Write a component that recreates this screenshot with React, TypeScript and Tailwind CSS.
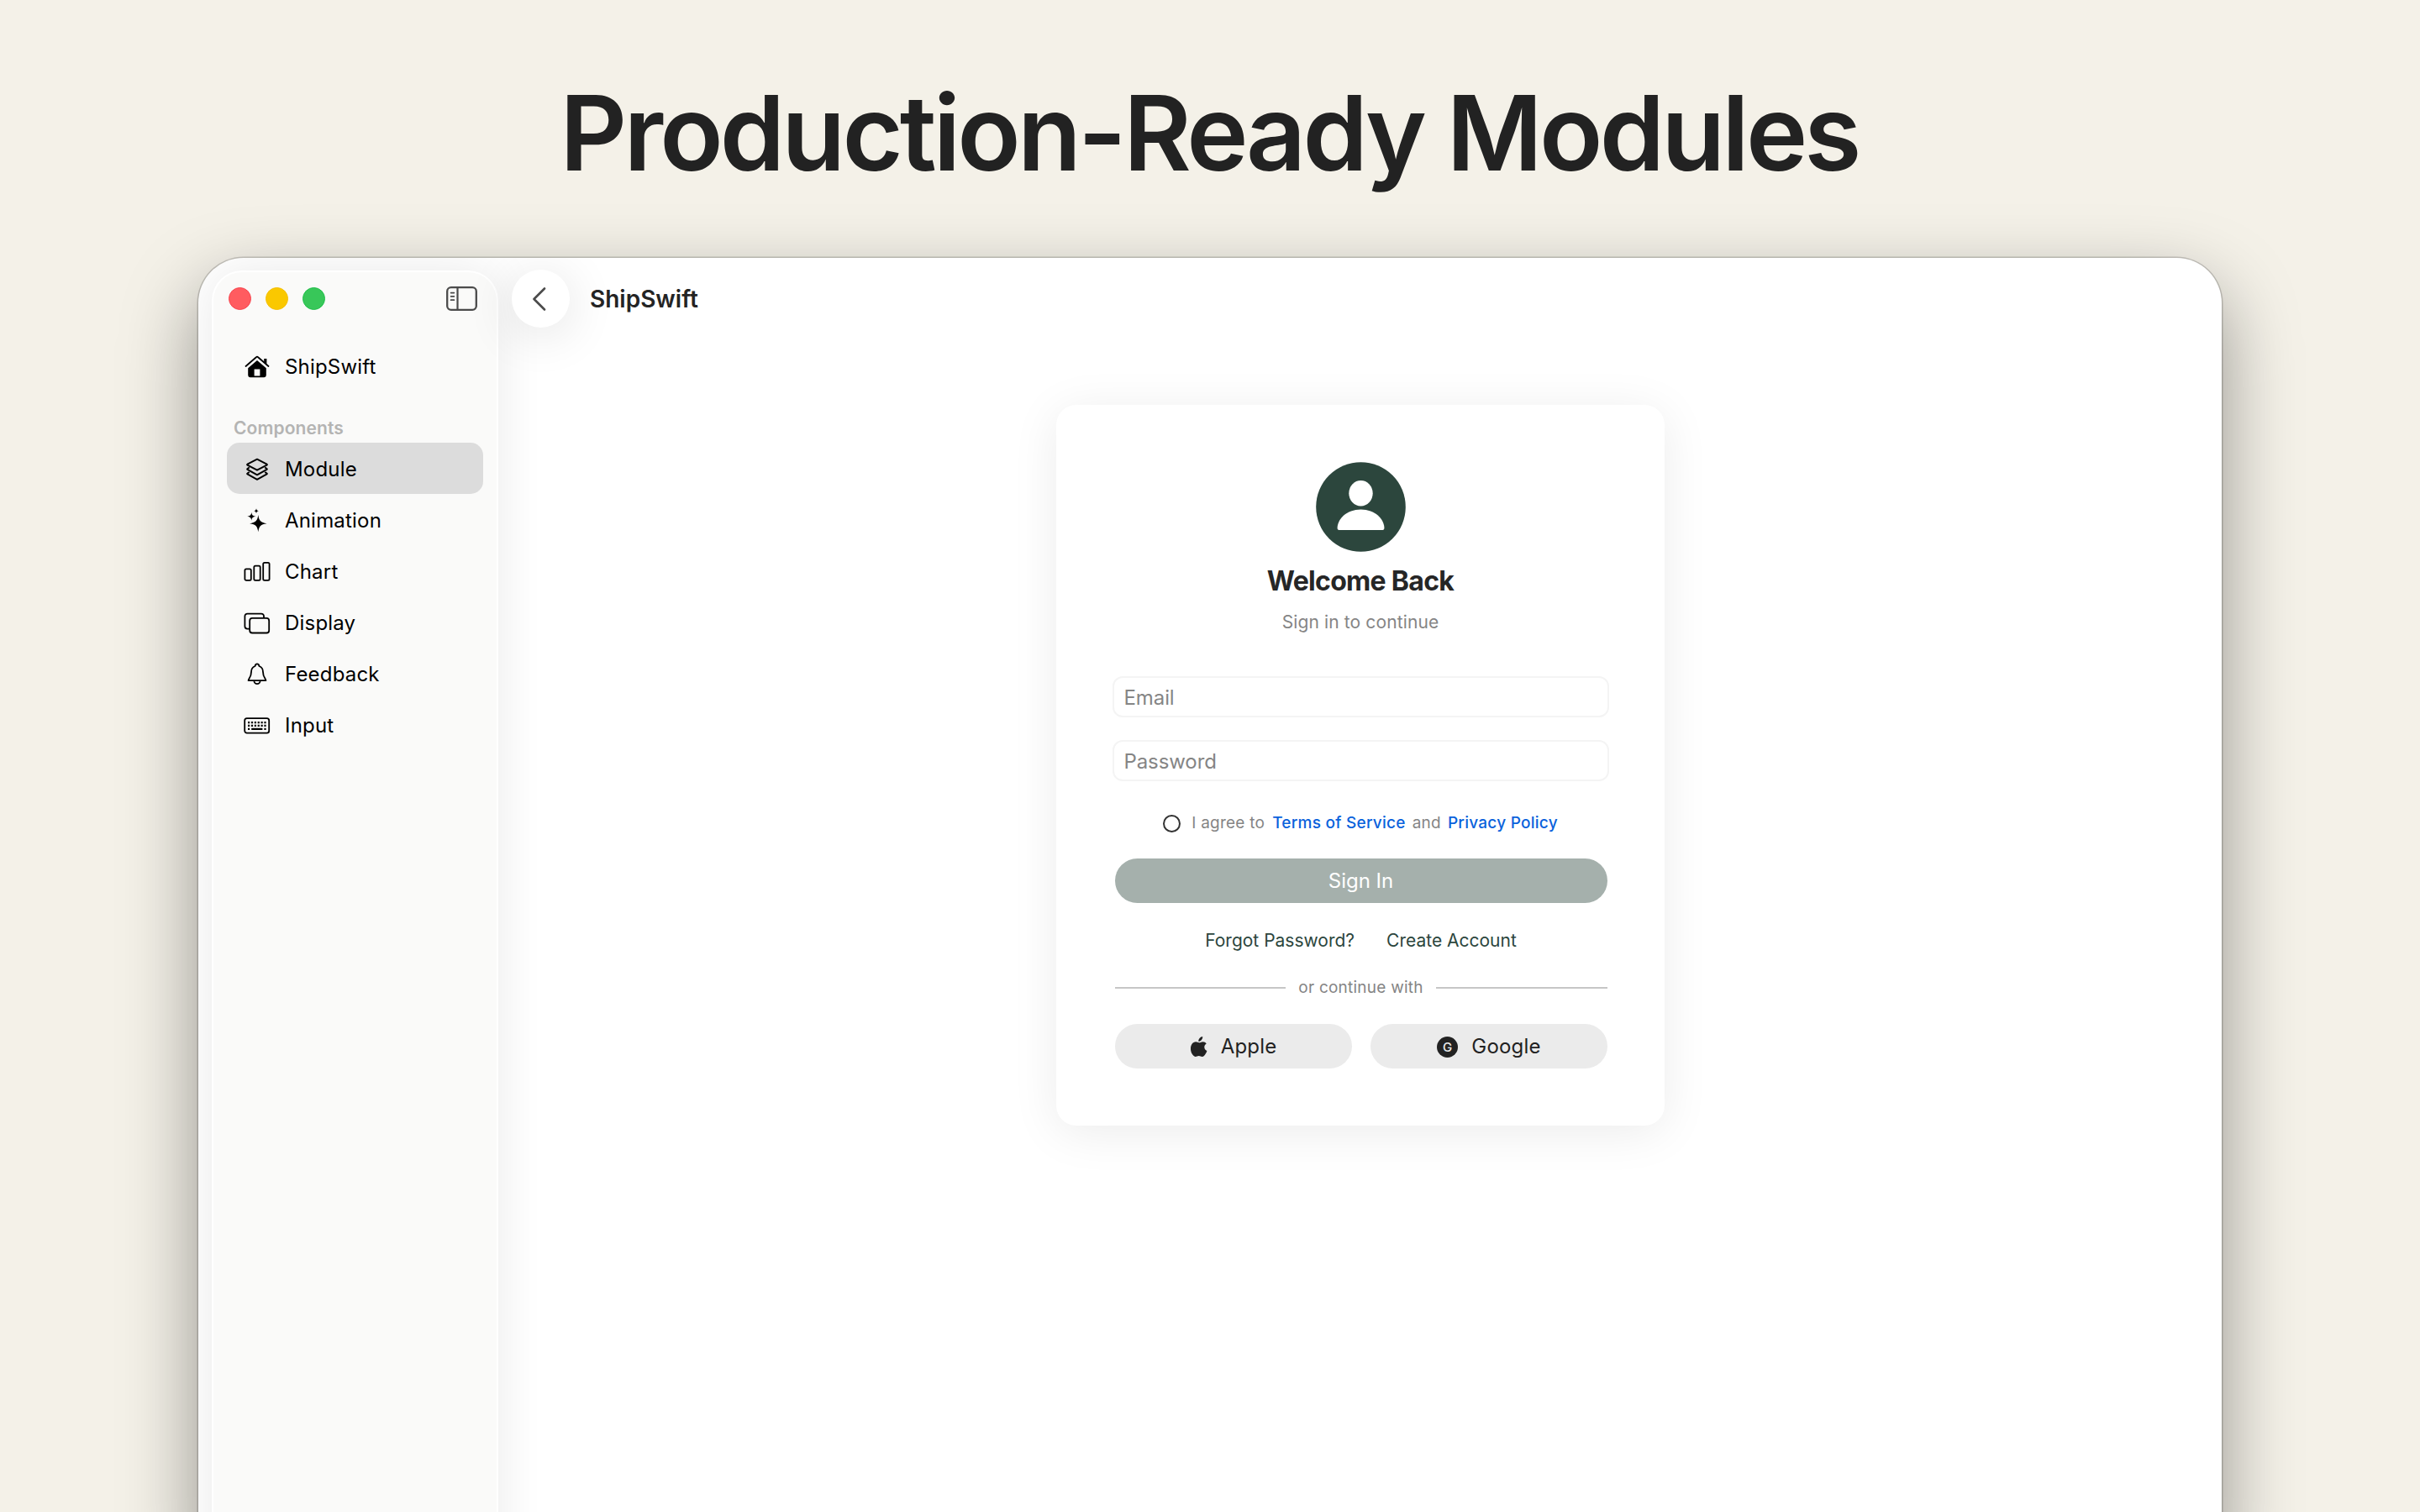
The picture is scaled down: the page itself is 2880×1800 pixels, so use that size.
import React, { useState } from 'react';

interface NavItem {
  label: string;
  icon: React.ReactNode;
}

const HomeIcon = () => (
  <svg width="30" height="30" viewBox="0 0 30 30" fill="none">
    <path d="M1.5 14 13.9 3.2a1.6 1.6 0 0 1 2.2 0L28.5 14" stroke="black" strokeWidth="1.8" strokeLinecap="round" strokeLinejoin="round" />
    <path d="M23.2 5h3.2v6.6l-3.2-2.8z" fill="black" />
    <path fillRule="evenodd" d="M15 7 25.8 16.2v8.6a2.4 2.4 0 0 1-2.4 2.4H6.6a2.4 2.4 0 0 1-2.4-2.4v-8.6zM11.6 17.6v8h6.8v-8z" fill="black" />
  </svg>
);

const StackIcon = () => (
  <svg width="30" height="30" viewBox="0 0 30 30" fill="none" stroke="black" strokeWidth="1.9" strokeLinejoin="round" strokeLinecap="round">
    <path d="M15 2.6 26.6 8.7a.5.5 0 0 1 0 .9L15 15.7 3.4 9.6a.5.5 0 0 1 0-.9z" />
    <path d="M5.2 12.9 3.4 14a.5.5 0 0 0 0 .9L15 21.3l11.6-6.4a.5.5 0 0 0 0-.9l-1.800-1.100" />
    <path d="M5.2 18.4 3.4 19.5a.5.5 0 0 0 0 .9L15 26.9l11.6-6.5a.5.5 0 0 0 0-.9l-1.800-1.100" />
  </svg>
);

const SparklesIcon = () => (
  <svg width="30" height="30" viewBox="0 0 30 30" fill="black">
    <path d="M16.3 8.100c1 7.100 2.900 9.100 10.200 10.100-7.300 1-9.200 3-10.200 10.100-1-7.100-2.900-9.100-10.200-10.100 7.300-1 9.200-3 10.200-10.100z" />
    <path d="M8.300 4.700c.5 3.500 1.500 4.500 5 5-3.500.5-4.500 1.500-5 5-.5-3.500-1.500-4.500-5-5 3.500-.5 4.500-1.500 5-5z" />
    <path d="M14 .2c.3 1.900 1 2.600 3 3-2 .4-2.700 1.100-3 3-.3-1.900-1-2.600-3-3 2-.4 2.700-1.100 3-3z" />
  </svg>
);

const ChartIcon = () => (
  <svg width="32" height="30" viewBox="0 0 32 30" fill="none" stroke="black" strokeWidth="1.8">
    <rect x="1.4" y="11.3" width="7.4" height="13.6" rx="1.6" />
    <rect x="12.3" y="7.6" width="7.4" height="17.3" rx="1.6" />
    <rect x="23.2" y="3.9" width="7.4" height="21" rx="1.6" />
  </svg>
);

const DisplayIcon = () => (
  <svg width="32" height="30" viewBox="0 0 32 30" fill="none" stroke="black" strokeWidth="1.8">
    <path d="M24 8.600V6.600a3 3 0 0 0-3-3H4.400a3 3 0 0 0-3 3v12a3 3 0 0 0 3 3h2.800" />
    <rect x="7.2" y="8.9" width="23" height="17.6" rx="3" />
  </svg>
);

const BellIcon = () => (
  <svg width="30" height="30" viewBox="0 0 30 30" fill="none" stroke="black" strokeWidth="1.8" strokeLinejoin="round">
    <path d="M4.600 22.200c0-2.600 3.400-3.400 3.400-10.200 0-3.700 2-6 4.500-7C12.900 3.300 13.800 2.400 15 2.400s2.100.9 2.500 2.600c2.500 1 4.500 3.300 4.500 7 0 6.800 3.400 7.600 3.400 10.200z" />
    <path d="M11.400 22.600a3.600 3.600 0 0 0 7.200 0" />
  </svg>
);

const KeyboardIcon = () => (
  <svg width="32" height="30" viewBox="0 0 32 30" fill="none">
    <rect x="1.2" y="6.2" width="29" height="17.4" rx="2.6" stroke="black" strokeWidth="1.8" />
    <path d="M5 11.200h21.600M5 14.900h21.600" stroke="black" strokeWidth="2.2" strokeDasharray="2.2 1.68" />
    <path d="M5 18.900h2.200M9.200 18.900h13.200M24.400 18.900h2.200" stroke="black" strokeWidth="2.1" />
  </svg>
);

const SidebarIcon = () => (
  <svg width="37" height="29" viewBox="0 0 37 29" fill="none" stroke="#4b4b4b" strokeLinecap="round">
    <rect x="1.2" y="1.2" width="34.6" height="26.6" rx="4.6" strokeWidth="2.3" />
    <path d="M13.5 1.5v26" strokeWidth="2.2" />
    <path d="M5.600 7.600h3.800M5.600 11.800h3.800M5.600 16.200h3.800" strokeWidth="1.7" />
  </svg>
);

const AppleIcon = () => (
  <svg width="20" height="25" viewBox="0 0 20 25" fill="#222">
    <path d="M14.200 0c.2 1.500-.4 2.900-1.300 4-.9 1.100-2.200 1.900-3.600 1.800-.2-1.400.5-2.900 1.300-3.800C11.500.9 13 .1 14.200 0z" />
    <path d="M18.700 8.500c-1.500.9-2.400 2.200-2.400 4.100 0 2.100 1.200 3.700 3.100 4.500-.4 1.300-1 2.500-1.800 3.600-1.100 1.600-2.200 3.200-3.900 3.200-1.700 0-2.100-1-4-1s-2.500 1-4 1c-1.700.1-3-1.700-4.100-3.300C-.3 17.400-.8 11.900 1.400 8.900c1.200-1.600 2.900-2.600 4.700-2.600 1.700 0 2.900 1 4.100 1 1.200 0 2.500-1.100 4.500-1.100 1.600 0 3.100.9 4 2.300z" />
  </svg>
);

const navItems: NavItem[] = [
  { label: 'Module', icon: <StackIcon /> },
  { label: 'Animation', icon: <SparklesIcon /> },
  { label: 'Chart', icon: <ChartIcon /> },
  { label: 'Display', icon: <DisplayIcon /> },
  { label: 'Feedback', icon: <BellIcon /> },
  { label: 'Input', icon: <KeyboardIcon /> },
];

interface NavRowProps extends NavItem {
  active?: boolean;
  onClick?: () => void;
}

const NavRow: React.FC<NavRowProps> = ({ label, icon, active, onClick }) => (
  <button
    onClick={onClick}
    className={`flex h-[61px] w-full items-center gap-[17px] rounded-[15px] pt-0.5 pl-5 text-2xl tracking-[0.008em] text-black ${
      active ? 'bg-[#dcdcdc]' : ''
    }`}
  >
    <span className="flex w-8 shrink-0 justify-center">{icon}</span>
    {label}
  </button>
);

const Sidebar = () => {
  const [selected, setSelected] = useState('Module');

  return (
    <aside className="mt-[15px] mr-px ml-4 w-[341px] shrink-0 rounded-t-[36px] border-2 border-b-0 border-white bg-[#fafaf9] px-4 shadow-[0_0_56px_rgba(0,0,0,0.09)]">
      <div className="flex h-[63px] items-center">
        <div className="flex gap-[17px] pl-0.5">
          <span className="size-[27px] rounded-full border border-[#f8454f] bg-[#ff5c60]" />
          <span className="size-[27px] rounded-full border border-[#f5bf00] bg-[#fac800]" />
          <span className="size-[27px] rounded-full border border-[#1fc04a] bg-[#38c759]" />
        </div>
        <span className="mr-[7px] ml-auto">
          <SidebarIcon />
        </span>
      </div>
      <div className="pt-[18px]">
        <NavRow label="ShipSwift" icon={<HomeIcon />} />
      </div>
      <div className="flex h-[61px] items-end px-2 pb-[3px] text-[21px] leading-7 font-semibold tracking-[0.005em] text-[#b4b4b3]">
        Components
      </div>
      <nav>
        {navItems.map((item) => (
          <NavRow
            key={item.label}
            {...item}
            active={item.label === selected}
            onClick={() => setSelected(item.label)}
          />
        ))}
      </nav>
    </aside>
  );
};

const Field: React.FC<{ type: string; placeholder: string }> = ({ type, placeholder }) => (
  <input
    type={type}
    placeholder={placeholder}
    className="h-[49px] w-[591px] rounded-[12px] border-2 border-[#f4f4f4] bg-white px-3 pt-0.5 text-2xl tracking-[-0.004em] placeholder:text-[#858585]"
  />
);

const SignInCard = () => (
  <section className="flex h-[858px] w-[724px] flex-col items-center rounded-[24px] bg-white pt-[68px] shadow-[0_8px_56px_rgba(0,0,0,0.08)]">
    <svg width="107" height="107" viewBox="0 0 107 107">
      <circle cx="53.5" cy="53.5" r="53.3" fill="#2c463d" />
      <ellipse cx="53.5" cy="37.2" rx="14.2" ry="15.2" fill="white" />
      <path d="M27.500 81c-1.300 0-1.900-.9-1.900-2.400 0-10.500 11-22.100 27.900-22.100s27.900 11.600 27.900 22.100c0 1.500-.6 2.400-1.900 2.400z" fill="white" />
    </svg>
    <h2 className="mt-[15px] text-[32px] leading-[40px] font-bold tracking-[-0.022em] text-[#262626]">Welcome Back</h2>
    <p className="mt-[15px] text-[21px] leading-7 tracking-[0.006em] text-[#858585]">Sign in to continue</p>

    <div className="mt-[50px] flex flex-col gap-[27px]">
      <Field type="email" placeholder="Email" />
      <Field type="password" placeholder="Password" />
    </div>

    <div className="mt-9 flex h-7 items-center text-[19px] tracking-[0.013em] text-[#858585]">
      <span className="mr-[13px] size-[21px] rounded-full border-2 border-[#333]" />
      <span>I agree to</span>
      <span className="ml-[9px] font-medium text-[#0a62dc]">Terms of Service</span>
      <span className="ml-2">and</span>
      <span className="ml-2 font-medium text-[#0a62dc]">Privacy Policy</span>
    </div>

    <div className="flex w-[587px] flex-col pl-px">
      <button className="mt-7 h-[53px] rounded-full bg-[#a5b0ac] pt-px text-2xl text-white">Sign In</button>

      <div className="mt-[31px] flex h-7 items-center justify-center gap-[38px] text-[21px] text-[#2c463d]">
        <span>Forgot Password?</span>
        <span>Create Account</span>
      </div>

      <div className="mt-7 flex h-7 items-center gap-[15px] text-[19px] tracking-[0.012em] text-[#858585]">
        <span className="h-0.5 flex-1 bg-[#c6c6c6]" />
        <span>or continue with</span>
        <span className="h-0.5 flex-1 bg-[#c6c6c6]" />
      </div>

      <div className="mt-[29px] flex gap-[22px] text-2xl tracking-[0.008em] text-[#222]">
        <button className="flex h-[53px] flex-1 items-center justify-center gap-4 rounded-full bg-[#ebebeb] pt-px pl-px">
          <AppleIcon />
          Apple
        </button>
        <button className="flex h-[53px] flex-1 items-center justify-center gap-4 rounded-full bg-[#ebebeb] pt-px pl-px">
          <span className="flex size-[25px] items-center justify-center rounded-full bg-[#222] text-[15px] leading-none font-medium text-[#ebebeb]">
            G
          </span>
          Google
        </button>
      </div>
    </div>
  </section>
);

export default function App() {
  return (
    <div className="flex h-[1800px] w-[2880px] flex-col items-center overflow-hidden bg-[#f4f1e8] font-['Inter',sans-serif]">
      <h1 className="flex h-[307px] shrink-0 items-center pt-[8px] pr-0.5 text-[124px] leading-none font-semibold tracking-[-0.031em] whitespace-nowrap text-[#222]">
        Production-Ready Modules
      </h1>
      <div className="flex h-[1560px] w-[2408px] shrink-0 overflow-hidden rounded-[54px] bg-white shadow-[0_0_0_1.5px_rgba(0,0,0,0.18),0_36px_90px_rgba(0,0,0,0.4)]">
        <Sidebar />
        <main className="flex flex-1 flex-col">
          <header className="flex items-center gap-6 pt-[14px] pl-[15px]">
            <button className="flex size-[69px] items-center justify-center rounded-full bg-white pr-[3px] shadow-[0_8px_60px_rgba(0,0,0,0.12)]">
              <svg width="16" height="28" viewBox="0 0 16 28" fill="none" stroke="#4b4b4b" strokeWidth="2.6" strokeLinecap="round" strokeLinejoin="round">
                <path d="M14 1.500 1.500 14 14 26.500" />
              </svg>
            </button>
            <span className="text-[28px] font-semibold text-[#242424]">ShipSwift</span>
          </header>
          <div className="flex justify-center pt-[92px]">
            <SignInCard />
          </div>
        </main>
      </div>
    </div>
  );
}
